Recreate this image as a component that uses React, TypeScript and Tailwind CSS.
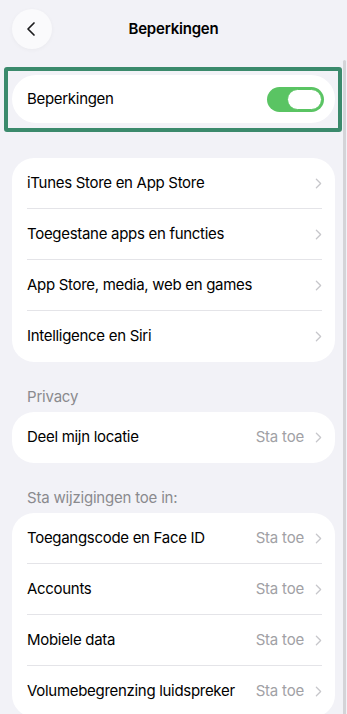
import { ChevronLeft, ChevronRight } from "lucide-react";

type Row = { label: string; value?: string };

const mainRows: Row[] = [
  { label: "iTunes Store en App Store" },
  { label: "Toegestane apps en functies" },
  { label: "App Store, media, web en games" },
  { label: "Intelligence en Siri" },
];

const changeRows: Row[] = [
  { label: "Toegangscode en Face ID", value: "Sta toe" },
  { label: "Accounts", value: "Sta toe" },
  { label: "Mobiele data", value: "Sta toe" },
  { label: "Volumebegrenzing luidspreker", value: "Sta toe" },
];

function SettingsRow({ row, last }: { row: Row; last: boolean }) {
  return (
    <div className="relative flex h-[51px] items-center pl-[15px] pr-[8px]">
      <span className="flex-1 text-[15px] tracking-[-0.3px] text-black">{row.label}</span>
      {row.value && (
        <span className="mr-[6px] text-[15px] tracking-[-0.2px] text-[#a1a1a5]">{row.value}</span>
      )}
      <ChevronRight size={17} strokeWidth={1.8} className="text-[#c7c7cb]" />
      {!last && <div className="absolute bottom-0 left-[15px] right-[13px] h-px bg-[#e4e4e8]" />}
    </div>
  );
}

function Card({ rows }: { rows: Row[] }) {
  return (
    <div className="mx-3 overflow-hidden rounded-[22px] bg-white">
      {rows.map((r, i) => (
        <SettingsRow key={r.label} row={r} last={i === rows.length - 1} />
      ))}
    </div>
  );
}

export default function App() {
  return (
    <div className="relative h-[714px] w-[347px] overflow-hidden bg-[#f2f2f7] font-['Inter',sans-serif]">
      {/* header */}
      <div className="flex items-center px-3 pt-[9px]">
        <button className="flex h-10 w-10 items-center justify-center rounded-full bg-[#fafafc] shadow-[0_1px_4px_rgba(0,0,0,0.04)]">
          <ChevronLeft size={24} strokeWidth={1.7} className="-ml-[3px] text-[#1c1c1e]" />
        </button>
        <div className="flex-1 pt-[1px] text-center text-[15px] font-semibold tracking-[-0.2px] text-black">
          Beperkingen
        </div>
        <div className="w-10" />
      </div>

      {/* highlighted toggle */}
      <div className="mx-1 mt-[18px] w-[338px] rounded-[3px] border-[4px] border-[#3b8a6c] pb-[5px] pl-1 pr-[3px] pt-1">
        <div className="flex h-[48px] items-center rounded-[24px] bg-white pl-[15px] pr-[11px]">
          <span className="flex-1 text-[15px] tracking-[-0.3px] text-black">Beperkingen</span>
          <div className="flex h-[25px] w-[57px] items-center justify-end rounded-full bg-[#5ac463] pr-[2px]">
            <div className="h-[21px] w-[35px] rounded-full border border-[#5ac463] bg-white" />
          </div>
        </div>
      </div>

      <div className="mt-[26px]">
        <Card rows={mainRows} />
      </div>

      <div className="mb-[3px] mt-[24px] px-[27px] text-[15px] tracking-[-0.2px] text-[#8a8a8e]">Privacy</div>
      <Card rows={[{ label: "Deel mijn locatie", value: "Sta toe" }]} />

      <div className="mb-[4px] mt-[24px] px-[27px] text-[15px] tracking-[-0.2px] text-[#8a8a8e]">
        Sta wijzigingen toe in:
      </div>
      <Card rows={changeRows} />

      {/* scroll indicator */}
      <div className="absolute right-[1px] top-[60px] h-[660px] w-[3px] rounded-full bg-[#d4d4d8]" />
    </div>
  );
}
